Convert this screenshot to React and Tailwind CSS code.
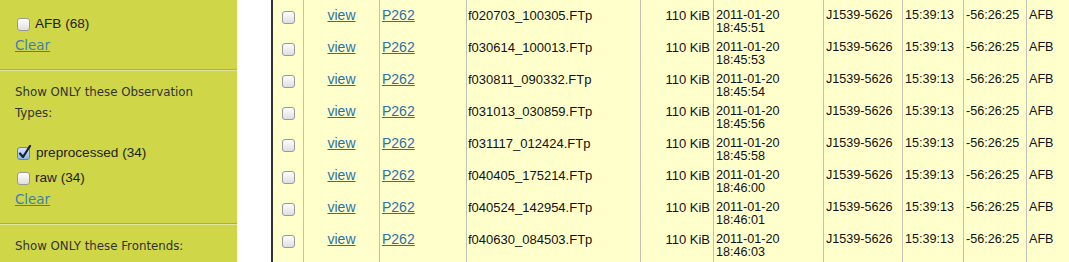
import React from "react";

const rows = [
  ["f020703_100305.FTp", "18:45:51"],
  ["f030614_100013.FTp", "18:45:53"],
  ["f030811_090332.FTp", "18:45:54"],
  ["f031013_030859.FTp", "18:45:56"],
  ["f031117_012424.FTp", "18:45:58"],
  ["f040405_175214.FTp", "18:46:00"],
  ["f040524_142954.FTp", "18:46:01"],
  ["f040630_084503.FTp", "18:46:03"],
];

const cols = "grid grid-cols-[30px_76px_87px_174px_73px_110px_79px_61px_63px_1fr]";
const cell = "border-l border-[#c2c2b4]";

function Box({ checked }) {
  if (checked) {
    return (
      <svg width="15" height="15" viewBox="0 0 15 15" className="block shrink-0">
        <defs>
          <linearGradient id="cbOn" x1="0" y1="0" x2="0" y2="1">
            <stop offset="0" stopColor="#d6e8fb" />
            <stop offset="1" stopColor="#8db6e4" />
          </linearGradient>
        </defs>
        <rect x="0.5" y="2.5" width="12" height="12" rx="2.5" fill="url(#cbOn)" stroke="#6a86a8" />
        <path d="M3 8.5 L6 12 L13 1" fill="none" stroke="#15223f" strokeWidth="2.3" strokeLinecap="round" strokeLinejoin="round" />
      </svg>
    );
  }
  return (
    <svg width="13" height="13" viewBox="0 0 13 13" className="block shrink-0">
      <defs>
        <linearGradient id="cbOff" x1="0" y1="0" x2="0" y2="1">
          <stop offset="0" stopColor="#ffffff" />
          <stop offset="1" stopColor="#dedede" />
        </linearGradient>
      </defs>
      <rect x="0.5" y="0.5" width="12" height="12" rx="2.5" fill="url(#cbOff)" stroke="#9a9a94" />
    </svg>
  );
}

function Divider() {
  return (
    <div>
      <div className="h-px bg-[#a3a39a]" />
      <div className="h-px bg-[#e2e79c]" />
    </div>
  );
}

function Check({ checked, label }) {
  return (
    <div className="flex items-center h-[20px] text-[13.6px] text-[#222] font-['Liberation_Sans',Arial,sans-serif]">
      <div className={checked ? "ml-[2px] mr-[4px] -mt-[2px]" : "ml-[2px] mr-[5px]"}>
        <Box checked={checked} />
      </div>
      <span>{label}</span>
    </div>
  );
}

function Clear({ mt }) {
  return (
    <div className={`h-[20px] leading-[20px] ${mt} text-[13.4px] font-['DejaVu_Sans',Verdana,sans-serif]`}>
      <a href="#" className="text-[#3d7fb5] underline">Clear</a>
    </div>
  );
}

export default function App() {
  return (
    <div className="flex w-[1069px] h-[262px] overflow-hidden bg-white">
      <aside className="w-[237px] shrink-0 bg-[#cfd648] font-['DejaVu_Sans',Verdana,sans-serif]">
        <div className="pl-[15px] pt-[14px] pb-[13px]">
          <Check label="AFB (68)" />
          <Clear mt="mt-[2px]" />
        </div>
        <Divider />
        <div className="px-[15px] pt-[11px] pb-[13px]">
          <p className="text-[11.8px] leading-[21px] text-[#333]">Show ONLY these Observation Types:</p>
          <div className="mt-[19px]">
            <Check checked label="preprocessed (34)" />
          </div>
          <div className="mt-[5px]">
            <Check label="raw (34)" />
          </div>
          <Clear mt="mt-[2px]" />
        </div>
        <Divider />
        <div className="px-[15px] pt-[11px]">
          <p className="text-[11.8px] leading-[21px] text-[#333]">Show ONLY these Frontends:</p>
        </div>
      </aside>

      <div className="ml-[34px] flex-1 border-l-2 border-[#333] bg-[#ffffcc] font-['Liberation_Sans',Arial,sans-serif] text-[13px] leading-[13px] text-[#111]">
        <div className={`${cols} h-[6px] overflow-hidden`}>
          <div />
          <div className={cell} />
          <div className={cell} />
          <div className={cell} />
          <div className={cell} />
          <div className={`${cell} pl-[2px] -mt-[10px] text-[12.6px]`}>18:45:50</div>
          <div className={cell} />
          <div className={cell} />
          <div className={cell} />
          <div className={cell} />
        </div>
        {rows.map(([file, time], i) => (
          <div key={i} className={`${cols} h-[32px]`}>
            <div className="flex justify-center pt-[5px]">
              <Box />
            </div>
            <div className={`${cell} pt-[2px] text-center text-[14px] leading-[14px]`}>
              <a href="#" className="text-[#2f6fa8] underline">view</a>
            </div>
            <div className={`${cell} pl-[2px] pt-[2px] text-[14px] leading-[14px]`}>
              <a href="#" className="text-[#2f6fa8] underline">P262</a>
            </div>
            <div className={`${cell} pl-[1px] pt-[3px]`}>{file}</div>
            <div className={`${cell} pr-[3px] pt-[3px] text-right`}>110 KiB</div>
            <div className={`${cell} pl-[2px] pt-[3px] text-[12.6px]`}>
              2011-01-20
              <br />
              {time}
            </div>
            <div className={`${cell} pl-[2px] pt-[3px] text-[12.6px]`}>J1539-5626</div>
            <div className={`${cell} pl-[2px] pt-[3px] text-[12.6px]`}>15:39:13</div>
            <div className={`${cell} pl-[2px] pt-[3px] text-[12.6px]`}>-56:26:25</div>
            <div className={`${cell} pl-[2px] pt-[3px] text-[12.6px]`}>AFB</div>
          </div>
        ))}
      </div>
    </div>
  );
}
